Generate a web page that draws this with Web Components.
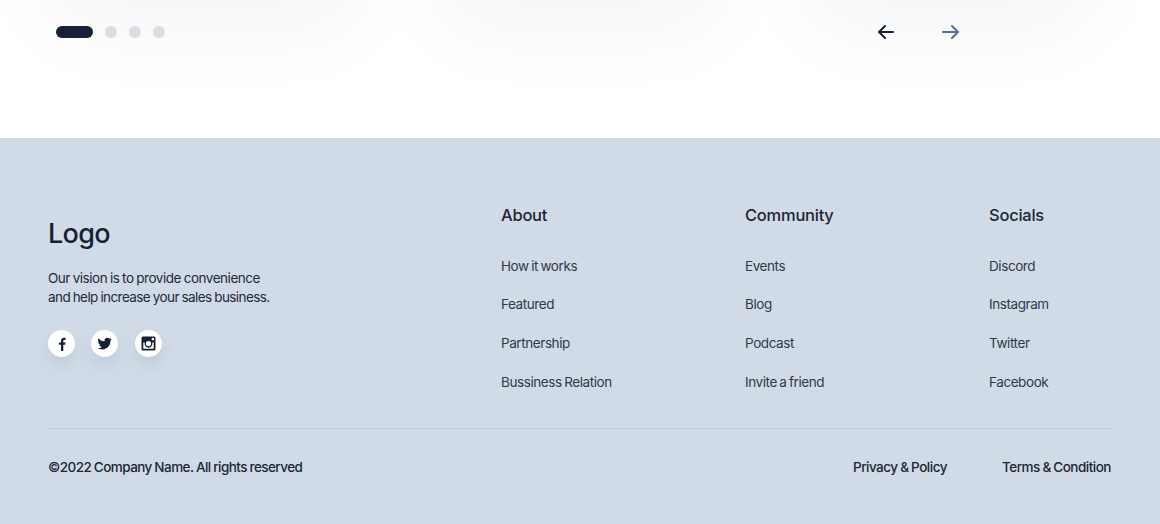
<!DOCTYPE html>
<html lang="en">
<head>
<meta charset="utf-8">
<title>Footer</title>
<style>
    html, body { margin: 0; padding: 0; background: #fff; }
    body { font-family: "Inter", "Liberation Sans", sans-serif; color: #1a2333; width: 1160px; height: 524px; overflow: hidden; }
</style>
</head>
<body>
<slider-controls></slider-controls>
<site-footer>
    <footer-brand slot="brand"></footer-brand>
    <footer-column slot="columns" title="About" links="How it works|Featured|Partnership|Bussiness Relation"></footer-column>
    <footer-column slot="columns" title="Community" links="Events|Blog|Podcast|Invite a friend"></footer-column>
    <footer-column slot="columns" title="Socials" links="Discord|Instagram|Twitter|Facebook"></footer-column>
</site-footer>

<script>
class SliderControls extends HTMLElement {
    constructor() {
        super();
        this.attachShadow({ mode: 'open' });
    }

    connectedCallback() {
        this.shadowRoot.innerHTML = `
            <style>
                :host { display: block; height: 138px; position: relative; overflow: hidden; background: #fff; }
                .glow { position: absolute; top: -130px; height: 130px; border-radius: 40px; box-shadow: 0 24px 90px rgba(20, 40, 80, 0.05); }
                .row { position: relative; display: flex; align-items: center; justify-content: space-between; height: 12px; padding: 26px 0 0 56px; width: 907px; }
                .dots { display: flex; align-items: center; gap: 12px; }
                .dots span { width: 12px; height: 12px; border-radius: 50%; background: #d9dee5; }
                .dots .active { width: 37px; border-radius: 6px; background: #172135; }
                .arrows { display: flex; gap: 41px; height: 24px; align-items: center; }
                svg { display: block; width: 24px; height: 24px; fill: none; stroke-width: 2; stroke-linecap: round; stroke-linejoin: round; }
            </style>
            <div class="glow" style="left: 50px; width: 310px"></div>
            <div class="glow" style="left: 440px; width: 280px"></div>
            <div class="glow" style="left: 810px; width: 280px"></div>
            <div class="row">
                <div class="dots"><span class="active"></span><span></span><span></span><span></span></div>
                <div class="arrows">
                    <svg viewBox="0 0 24 24" stroke="#172135"><path d="M19 12H5M11 6l-6 6 6 6"/></svg>
                    <svg viewBox="0 0 24 24" stroke="#4f7099"><path d="M4 12h15M13 6l6 6-6 6"/></svg>
                </div>
            </div>
        `;
    }
}

class SocialButton extends HTMLElement {
    constructor() {
        super();
        this.attachShadow({ mode: 'open' });
    }

    connectedCallback() {
        this.shadowRoot.innerHTML = `
            <style>
                :host { display: flex; align-items: center; justify-content: center; width: 27px; height: 27px; border-radius: 50%; background: #fff; box-shadow: 0 8px 14px rgba(90, 110, 140, 0.14); }
            </style>
            <slot></slot>
        `;
    }
}

class FooterBrand extends HTMLElement {
    constructor() {
        super();
        this.attachShadow({ mode: 'open' });
    }

    connectedCallback() {
        this.shadowRoot.innerHTML = `
            <style>
                :host { display: block; padding-top: 13px; }
                .logo { font-size: 27px; line-height: 36px; font-weight: 500; letter-spacing: -0.7px; color: #172135; }
                p { margin: 17px 0 0; font-size: 13.5px; line-height: 19px; letter-spacing: -0.47px; word-spacing: -0.6px; color: #1f2a3b; white-space: nowrap; }
                p span { letter-spacing: -0.58px; }
                .socials { display: flex; gap: 16.3px; margin-top: 23px; }
                svg { display: block; fill: #172135; }
            </style>
            <div class="logo">Logo</div>
            <p>Our vision is to provide convenience<br><span>and help increase your sales business.</span></p>
            <div class="socials">
                <social-button>
                    <svg width="14" height="14" viewBox="0 0 14 14"><path d="M8.3 14V7.8h1.9l.3-2.3H8.3V4.1c0-.7.2-1.1 1.1-1.1h1.2V.9C10.3.8 9.7.8 9 .8 7.3.8 6 1.8 6 3.8v1.7H4v2.3h2V14z"/></svg>
                </social-button>
                <social-button>
                    <svg width="15" height="15" viewBox="0 0 24 24"><path d="M23.5 4.9c-.8.4-1.7.6-2.6.7.9-.6 1.7-1.4 2-2.5-.9.5-1.9.9-2.9 1.1a4.7 4.7 0 0 0-8 4.3C8.1 8.3 4.7 6.4 2.4 3.6a4.7 4.7 0 0 0 1.5 6.3c-.8 0-1.500-.2-2.100-.6 0 2.300 1.600 4.200 3.800 4.700-.7.200-1.400.2-2.100.1.600 1.900 2.300 3.200 4.400 3.300A9.500 9.500 0 0 1 .9 19.300 13.400 13.400 0 0 0 21.500 7.400c.8-.7 1.500-1.500 2-2.500z"/></svg>
                </social-button>
                <social-button>
                    <svg width="15" height="15" viewBox="0 0 15 15"><path fill-rule="evenodd" d="M2 .5h11A1.500 1.500 0 0 1 14.500 2v11a1.500 1.500 0 0 1-1.500 1.500H2A1.500 1.500 0 0 1 .5 13V2A1.500 1.500 0 0 1 2 .5zM10.800 2v2.200H13V2zM2.300 6.500v6.200h10.400V6.500h-1.500a3.900 3.900 0 1 1-7.400 0zM7.500 5a2.600 2.600 0 1 0 0 5.200 2.600 2.600 0 0 0 0-5.200z"/></svg>
                </social-button>
            </div>
        `;
    }
}

class FooterColumn extends HTMLElement {
    constructor() {
        super();
        this.attachShadow({ mode: 'open' });
    }

    connectedCallback() {
        const links = (this.getAttribute('links') || '').split('|');
        this.shadowRoot.innerHTML = `
            <style>
                :host { display: block; }
                h4 { margin: 0 0 28.6px; font-size: 16.5px; line-height: 24px; font-weight: 500; letter-spacing: -0.25px; color: #1c2635; }
                ul { list-style: none; margin: 0; padding: 0; display: flex; flex-direction: column; gap: 18.67px; }
                li { font-size: 13.5px; line-height: 20px; letter-spacing: -0.42px; word-spacing: -0.9px; color: #2f3a4b; white-space: nowrap; }
            </style>
            <h4>${this.getAttribute('title')}</h4>
            <ul>${links.map(link => `<li>${link}</li>`).join('')}</ul>
        `;
    }
}

class SiteFooter extends HTMLElement {
    constructor() {
        super();
        this.attachShadow({ mode: 'open' });
    }

    connectedCallback() {
        this.shadowRoot.innerHTML = `
            <style>
                :host { display: block; height: 386px; box-sizing: border-box; padding: 65px 48px 0; background: #d1dbe7; }
                .top { display: flex; justify-content: space-between; height: 225px; border-bottom: 1px solid #c3cfde; }
                .columns { display: grid; grid-template-columns: 244px 244px 123px; width: 611px; }
                .bottom { display: flex; justify-content: space-between; align-items: center; padding-top: 28px; font-size: 13.5px; line-height: 20px; font-weight: 500; letter-spacing: -0.55px; word-spacing: -0.5px; color: #1c2635; }
                .legal { display: flex; gap: 55px; padding-right: 1px; letter-spacing: -0.5px; }
            </style>
            <div class="top">
                <slot name="brand"></slot>
                <div class="columns"><slot name="columns"></slot></div>
            </div>
            <div class="bottom">
                <span>©2022 Company Name. All rights reserved</span>
                <div class="legal"><span>Privacy &amp; Policy</span><span>Terms &amp; Condition</span></div>
            </div>
        `;
    }
}

customElements.define('slider-controls', SliderControls);
customElements.define('social-button', SocialButton);
customElements.define('footer-brand', FooterBrand);
customElements.define('footer-column', FooterColumn);
customElements.define('site-footer', SiteFooter);
</script>
</body>
</html>
